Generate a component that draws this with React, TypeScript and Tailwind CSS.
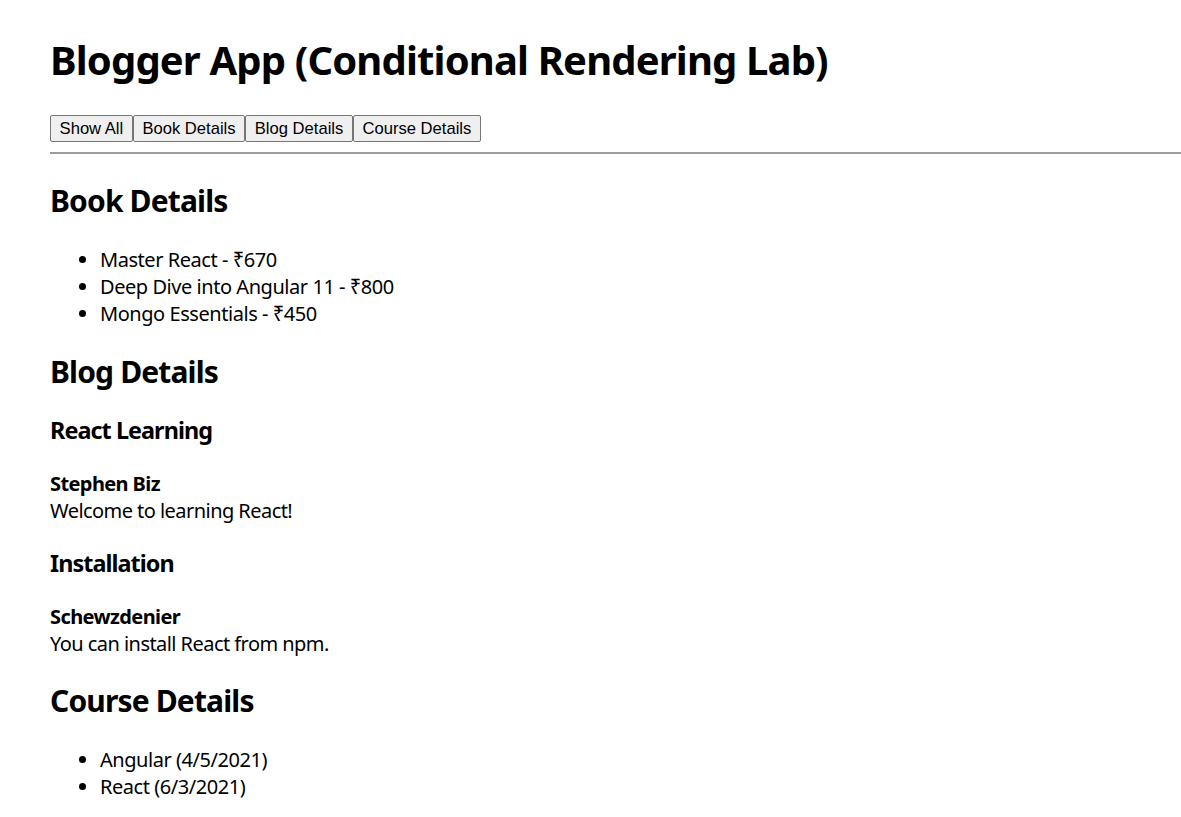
import React from "react";

const btn =
  "h-[27px] px-[8.6px] pt-[1px] border border-[#767676] rounded-[2px] bg-[#efefef] text-[16.6px] leading-none text-black tracking-normal font-['Liberation_Sans',Arial,sans-serif]";

export default function App() {
  return (
    <div className="min-h-[817px] bg-white pl-[50px] pt-[33px] text-black font-['Noto_Sans',sans-serif] text-[20px] leading-[27px] tracking-[-0.5px]">
      <h1 className="text-[40px] leading-[54px] font-bold tracking-[-0.85px]">Blogger App (Conditional Rendering Lab)</h1>
      <div className="mt-[28px] flex">
        <button className={btn}>Show All</button>
        <button className={btn}>Book Details</button>
        <button className={btn}>Blog Details</button>
        <button className={btn}>Course Details</button>
      </div>
      <div className="mt-[10px] h-[2px] bg-[#9c9c9c]" />

      <h2 className="mt-[27px] text-[30px] leading-[40px] font-bold tracking-[-0.85px]">Book Details</h2>
      <ul className="mt-[25px] list-disc pl-[50px] tracking-[-0.45px]">
        <li>Master React - ₹670</li>
        <li>Deep Dive into Angular 11 - ₹800</li>
        <li>Mongo Essentials - ₹450</li>
      </ul>

      <h2 className="mt-[25px] text-[30px] leading-[40px] font-bold tracking-[-0.85px]">Blog Details</h2>
      <h3 className="mt-[23px] text-[23.4px] leading-[31px] font-bold tracking-[-0.95px]">React Learning</h3>
      <h4 className="mt-[24px] font-bold tracking-[-0.6px]">Stephen Biz</h4>
      <p className="tracking-[-0.55px]">Welcome to learning React!</p>
      <h3 className="mt-[24px] text-[23.4px] leading-[31px] font-bold tracking-[-0.95px]">Installation</h3>
      <h4 className="mt-[24px] font-bold tracking-[-0.6px]">Schewzdenier</h4>
      <p className="tracking-[-0.55px]">You can install React from npm.</p>

      <h2 className="mt-[24px] text-[30px] leading-[40px] font-bold tracking-[-0.85px]">Course Details</h2>
      <ul className="mt-[25px] list-disc pl-[50px] tracking-[-0.45px]">
        <li>Angular (4/5/2021)</li>
        <li>React (6/3/2021)</li>
      </ul>
    </div>
  );
}
